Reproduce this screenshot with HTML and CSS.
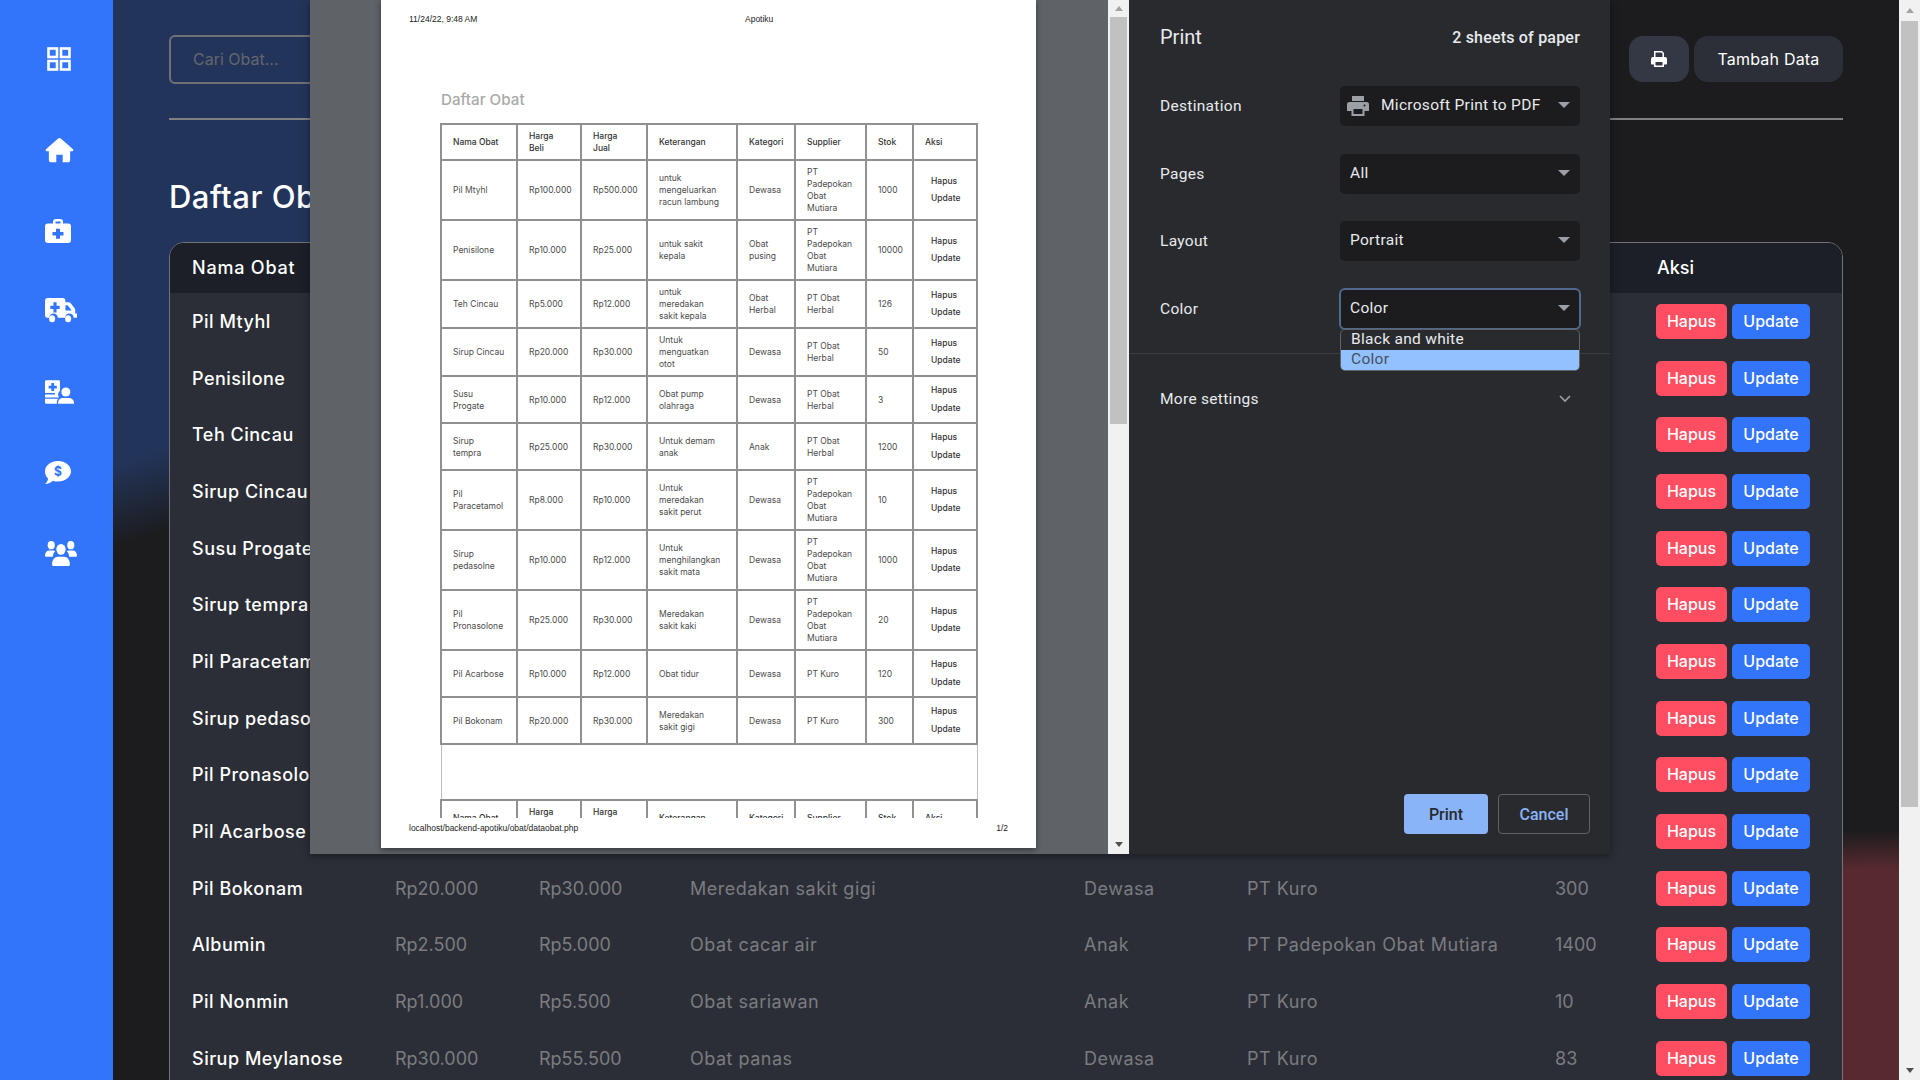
FILE: index.html
```html
<!DOCTYPE html>
<html lang="en">
<head>
    <meta charset="UTF-8">
    <meta name="viewport" content="width=device-width, initial-scale=1.0">
    <title>Apotiku</title>
    <link rel="stylesheet" href="styles.css">
</head>
<body>
    <nav class="sidebar">
        <a class="side-link first"><svg class="i-grid" viewBox="0 0 24 24"><g fill="none" stroke="#fff" stroke-width="2.6"><rect x="1.5" y="1.5" width="8.5" height="8.5"/><rect x="14" y="1.5" width="8.5" height="8.5"/><rect x="1.5" y="14" width="8.5" height="8.5"/><rect x="14" y="14" width="8.5" height="8.5"/></g></svg></a>
        <a class="side-link"><svg class="i-home" viewBox="0 0 30 26"><path fill="#fff" d="M15 0.5c.6 0 1 .2 1.4.6L29 12.2c.8.8.3 2-.8 2H26v9.3c0 1.3-1 2.3-2.3 2.3h-5.4v-8h-6.6v8H6.300c-1.300 0-2.300-1-2.300-2.300v-9.300H1.800c-1.100 0-1.600-1.200-.8-2L13.600 1.100c.4-.4.8-.6 1.400-.6z"/></svg></a>
        <a class="side-link"><svg class="i-case" viewBox="0.5 0 26 26" preserveAspectRatio="none"><path fill="#fff" fill-rule="evenodd" d="M10 5V3a3 3 0 0 1 3-3h4a3 3 0 0 1 3 3v2h5a3 3 0 0 1 3 3v15a3 3 0 0 1-3 3H5a3 3 0 0 1-3-3V8a3 3 0 0 1 3-3zm2.500-2.200V5h5V2.800zM13 10.500v3.500H9.500v4H13v3.500h4V18h3.500v-4H17v-3.500z" transform="translate(-1.500 0)"/></svg></a>
        <a class="side-link"><svg class="i-wide" viewBox="0 0 36 25" preserveAspectRatio="none"><path fill="#fff" fill-rule="evenodd" d="M2.500 0H20.500a2.500 2.500 0 0 1 2.500 2.500V4h3.500a3 3 0 0 1 2.200.9l4.400 4.700a3 3 0 0 1 .9 2.100V15h1a1 1 0 0 1 0 4h-2.700a5 5 0 0 0-9.800 0h-8a5 5 0 0 0-9.800 0H2.500A2.500 2.500 0 0 1 0 16.500V2.500A2.500 2.500 0 0 1 2.500 0zM9.500 4v3.500H6v3h3.500V14h3.500v-3.500h3.500v-3h-3.500V4zM23 7v5h7l-4.500-5z"/><circle cx="8" cy="20" r="3.400" fill="#fff"/><circle cx="26" cy="20" r="3.400" fill="#fff"/></svg></a>
        <a class="side-link"><svg class="i-doc" viewBox="0 0 32 26"><path fill="#fff" fill-rule="evenodd" d="M1.500 0H15a1.500 1.500 0 0 1 1.500 1.500V11.500a6 6 0 0 0-1 7.500H0V1.500A1.500 1.500 0 0 1 1.500 0zM7 3v3H4v3h3v3h3V9h3V6h-3V3zM0 14h11v1.800H0zM0 20.500h14.500a7 7 0 0 0-1.500 4V26H1.500A1.500 1.500 0 0 1 0 24.500z"/><circle cx="23" cy="13" r="5" fill="#fff"/><path fill="#fff" d="M14.500 26v-1.500c0-3 2.500-5 5-5h7c2.500 0 5.500 2 5.500 5V26z"/></svg></a>
        <a class="side-link"><svg class="i-chat" viewBox="1 0 28 23.500" preserveAspectRatio="none"><path fill="#fff" fill-rule="evenodd" d="M15 0c7.700 0 14 4.700 14 10.500S22.700 21 15 21c-2 0-3.900-.3-5.600-.9C7.700 22 4.300 23.500 1 23.500c1.700-1.300 3-3.400 3.300-5.700C2 15.900 1 13.300 1 10.500 1 4.700 7.300 0 15 0z"/><text x="15" y="15.500" class="dollar-sign">$</text></svg></a>
        <a class="side-link"><svg class="i-wide" viewBox="0 0 36 25" preserveAspectRatio="none"><g fill="#fff"><circle cx="7" cy="5" r="4"/><circle cx="29" cy="5" r="4"/><circle cx="18" cy="9" r="5.200"/><path d="M0 15c0-3 2-5 5-5h4c1 0 1.800.2 2.500.7-1.500 1.300-2.500 3-2.700 5.300H1a1 1 0 0 1-1-1z"/><path d="M36 15c0-3-2-5-5-5h-4c-1 0-1.800.2-2.500.7 1.500 1.300 2.500 3 2.700 5.300H35a1 1 0 0 0 1-1z"/><path d="M8 23c0-4 2.800-7 6.500-7h7c3.700 0 6.500 3 6.500 7v.5a1.500 1.500 0 0 1-1.500 1.500h-17A1.500 1.500 0 0 1 8 23.500z"/></g></svg></a>
    </nav>

    <main class="content">
        <header class="topbar">
            <input class="search" type="text" placeholder="Cari Obat...">
            <div class="top-actions">
                <button class="print-btn"><svg viewBox="0 0 16 16" width="16" height="16"><path fill="#fff" fill-rule="evenodd" d="M3 0h8l2 2v4h1a2 2 0 0 1 2 2v4.500a1 1 0 0 1-1 1h-2V16H3v-2.500H1a1 1 0 0 1-1-1V8a2 2 0 0 1 2-2h1zm1.500 1.500V6h7V2.600l-1.100-1.100zM4.500 11v3.500h7V11z"/></svg></button>
                <button class="add-btn">Tambah Data</button>
            </div>
        </header>
        <hr class="top-line">
        <h1 class="page-title">Daftar Obat</h1>

        <div class="table-card">
            <table class="drug-table">
                <colgroup>
                    <col class="c-name"><col class="c-buy"><col class="c-sell"><col class="c-desc"><col class="c-cat"><col class="c-sup"><col class="c-stock"><col class="c-act">
                </colgroup>
                <thead>
                    <tr><th>Nama Obat</th><th>Harga Beli</th><th>Harga Jual</th><th>Keterangan</th><th>Kategori</th><th>Supplier</th><th>Stok</th><th>Aksi</th></tr>
                </thead>
                <tbody>
                    <tr><td>Pil Mtyhl</td><td>Rp100.000</td><td>Rp500.000</td><td>untuk mengeluarkan racun lambung</td><td>Dewasa</td><td>PT Padepokan Obat Mutiara</td><td>1000</td><td><a class="btn red">Hapus</a><a class="btn blue">Update</a></td></tr>
                    <tr><td>Penisilone</td><td>Rp10.000</td><td>Rp25.000</td><td>untuk sakit kepala</td><td>Obat pusing</td><td>PT Padepokan Obat Mutiara</td><td>10000</td><td><a class="btn red">Hapus</a><a class="btn blue">Update</a></td></tr>
                    <tr><td>Teh Cincau</td><td>Rp5.000</td><td>Rp12.000</td><td>untuk meredakan sakit kepala</td><td>Obat Herbal</td><td>PT Obat Herbal</td><td>126</td><td><a class="btn red">Hapus</a><a class="btn blue">Update</a></td></tr>
                    <tr><td>Sirup Cincau</td><td>Rp20.000</td><td>Rp30.000</td><td>Untuk menguatkan otot</td><td>Dewasa</td><td>PT Obat Herbal</td><td>50</td><td><a class="btn red">Hapus</a><a class="btn blue">Update</a></td></tr>
                    <tr><td>Susu Progate</td><td>Rp10.000</td><td>Rp12.000</td><td>Obat pump olahraga</td><td>Dewasa</td><td>PT Obat Herbal</td><td>3</td><td><a class="btn red">Hapus</a><a class="btn blue">Update</a></td></tr>
                    <tr><td>Sirup tempra</td><td>Rp25.000</td><td>Rp30.000</td><td>Untuk demam anak</td><td>Anak</td><td>PT Obat Herbal</td><td>1200</td><td><a class="btn red">Hapus</a><a class="btn blue">Update</a></td></tr>
                    <tr><td>Pil Paracetamol</td><td>Rp8.000</td><td>Rp10.000</td><td>Untuk meredakan sakit perut</td><td>Dewasa</td><td>PT Padepokan Obat Mutiara</td><td>10</td><td><a class="btn red">Hapus</a><a class="btn blue">Update</a></td></tr>
                    <tr><td>Sirup pedasolne</td><td>Rp10.000</td><td>Rp12.000</td><td>Untuk menghilangkan sakit mata</td><td>Dewasa</td><td>PT Padepokan Obat Mutiara</td><td>1000</td><td><a class="btn red">Hapus</a><a class="btn blue">Update</a></td></tr>
                    <tr><td>Pil Pronasolone</td><td>Rp25.000</td><td>Rp30.000</td><td>Meredakan sakit kaki</td><td>Dewasa</td><td>PT Padepokan Obat Mutiara</td><td>20</td><td><a class="btn red">Hapus</a><a class="btn blue">Update</a></td></tr>
                    <tr><td>Pil Acarbose</td><td>Rp10.000</td><td>Rp12.000</td><td>Obat tidur</td><td>Dewasa</td><td>PT Kuro</td><td>120</td><td><a class="btn red">Hapus</a><a class="btn blue">Update</a></td></tr>
                    <tr><td>Pil Bokonam</td><td>Rp20.000</td><td>Rp30.000</td><td>Meredakan sakit gigi</td><td>Dewasa</td><td>PT Kuro</td><td>300</td><td><a class="btn red">Hapus</a><a class="btn blue">Update</a></td></tr>
                    <tr><td>Albumin</td><td>Rp2.500</td><td>Rp5.000</td><td>Obat cacar air</td><td>Anak</td><td>PT Padepokan Obat Mutiara</td><td>1400</td><td><a class="btn red">Hapus</a><a class="btn blue">Update</a></td></tr>
                    <tr><td>Pil Nonmin</td><td>Rp1.000</td><td>Rp5.500</td><td>Obat sariawan</td><td>Anak</td><td>PT Kuro</td><td>10</td><td><a class="btn red">Hapus</a><a class="btn blue">Update</a></td></tr>
                    <tr><td>Sirup Meylanose</td><td>Rp30.000</td><td>Rp55.500</td><td>Obat panas</td><td>Dewasa</td><td>PT Kuro</td><td>83</td><td><a class="btn red">Hapus</a><a class="btn blue">Update</a></td></tr>
                </tbody>
            </table>
        </div>
    </main>

    <div class="page-scroll">
        <span class="arrow-up"></span>
        <div class="page-thumb"></div>
        <span class="arrow-down"></span>
    </div>

    <!-- print dialog -->
    <div class="print-dialog">
        <div class="preview">
            <div class="sheet">
                <div class="sheet-head"><span class="sheet-date">11/24/22, 9:48 AM</span><span class="sheet-site">Apotiku</span></div>
                <div class="sheet-title">Daftar Obat</div>
                <div class="sheet-clip">
                    <table class="sheet-table">
                        <colgroup>
                            <col class="s-name"><col class="s-buy"><col class="s-sell"><col class="s-desc"><col class="s-cat"><col class="s-sup"><col class="s-stock"><col class="s-act">
                        </colgroup>
                        <tr class="s-head"><td>Nama Obat</td><td>Harga<br>Beli</td><td>Harga<br>Jual</td><td>Keterangan</td><td>Kategori</td><td>Supplier</td><td>Stok</td><td>Aksi</td></tr>
                        <tr><td>Pil Mtyhl</td><td>Rp100.000</td><td>Rp500.000</td><td>untuk<br>mengeluarkan<br>racun lambung</td><td>Dewasa</td><td>PT<br>Padepokan<br>Obat<br>Mutiara</td><td>1000</td><td class="s-links"><a>Hapus</a><a>Update</a></td></tr>
                        <tr><td>Penisilone</td><td>Rp10.000</td><td>Rp25.000</td><td>untuk sakit<br>kepala</td><td>Obat<br>pusing</td><td>PT<br>Padepokan<br>Obat<br>Mutiara</td><td>10000</td><td class="s-links"><a>Hapus</a><a>Update</a></td></tr>
                        <tr><td>Teh Cincau</td><td>Rp5.000</td><td>Rp12.000</td><td>untuk<br>meredakan<br>sakit kepala</td><td>Obat<br>Herbal</td><td>PT Obat<br>Herbal</td><td>126</td><td class="s-links"><a>Hapus</a><a>Update</a></td></tr>
                        <tr><td>Sirup Cincau</td><td>Rp20.000</td><td>Rp30.000</td><td>Untuk<br>menguatkan<br>otot</td><td>Dewasa</td><td>PT Obat<br>Herbal</td><td>50</td><td class="s-links"><a>Hapus</a><a>Update</a></td></tr>
                        <tr><td>Susu<br>Progate</td><td>Rp10.000</td><td>Rp12.000</td><td>Obat pump<br>olahraga</td><td>Dewasa</td><td>PT Obat<br>Herbal</td><td>3</td><td class="s-links"><a>Hapus</a><a>Update</a></td></tr>
                        <tr><td>Sirup<br>tempra</td><td>Rp25.000</td><td>Rp30.000</td><td>Untuk demam<br>anak</td><td>Anak</td><td>PT Obat<br>Herbal</td><td>1200</td><td class="s-links"><a>Hapus</a><a>Update</a></td></tr>
                        <tr><td>Pil<br>Paracetamol</td><td>Rp8.000</td><td>Rp10.000</td><td>Untuk<br>meredakan<br>sakit perut</td><td>Dewasa</td><td>PT<br>Padepokan<br>Obat<br>Mutiara</td><td>10</td><td class="s-links"><a>Hapus</a><a>Update</a></td></tr>
                        <tr><td>Sirup<br>pedasolne</td><td>Rp10.000</td><td>Rp12.000</td><td>Untuk<br>menghilangkan<br>sakit mata</td><td>Dewasa</td><td>PT<br>Padepokan<br>Obat<br>Mutiara</td><td>1000</td><td class="s-links"><a>Hapus</a><a>Update</a></td></tr>
                        <tr><td>Pil<br>Pronasolone</td><td>Rp25.000</td><td>Rp30.000</td><td>Meredakan<br>sakit kaki</td><td>Dewasa</td><td>PT<br>Padepokan<br>Obat<br>Mutiara</td><td>20</td><td class="s-links"><a>Hapus</a><a>Update</a></td></tr>
                        <tr><td>Pil Acarbose</td><td>Rp10.000</td><td>Rp12.000</td><td>Obat tidur</td><td>Dewasa</td><td>PT Kuro</td><td>120</td><td class="s-links"><a>Hapus</a><a>Update</a></td></tr>
                        <tr><td>Pil Bokonam</td><td>Rp20.000</td><td>Rp30.000</td><td>Meredakan<br>sakit gigi</td><td>Dewasa</td><td>PT Kuro</td><td>300</td><td class="s-links"><a>Hapus</a><a>Update</a></td></tr>
                        <tr class="s-break"><td colspan="8"></td></tr>
                        <tr class="s-head"><td>Nama Obat</td><td>Harga<br>Beli</td><td>Harga<br>Jual</td><td>Keterangan</td><td>Kategori</td><td>Supplier</td><td>Stok</td><td>Aksi</td></tr>
                    </table>
                </div>
                <div class="sheet-foot"><span>localhost/backend-apotiku/obat/dataobat.php</span><span>1/2</span></div>
            </div>
        </div>
        <div class="preview-scroll">
            <span class="arrow-up small"></span>
            <div class="preview-thumb"></div>
            <span class="arrow-down small"></span>
        </div>
        <aside class="settings">
            <div class="settings-top">
                <span class="settings-title">Print</span>
                <span class="sheet-count">2 sheets of paper</span>
            </div>
            <div class="setting">
                <span class="setting-label">Destination</span>
                <div class="select"><svg class="dest-icon" viewBox="0 0 22 20" width="22" height="20"><path fill="#9aa0a6" fill-rule="evenodd" d="M5 0h12v5H5zM2.500 6h17A2.500 2.500 0 0 1 22 8.500V15h-4.500v5h-13v-5H0V8.500A2.500 2.500 0 0 1 2.500 6zM6.500 13v5h9v-5zM17.500 8.500a1 1 0 1 0 0 2 1 1 0 0 0 0-2z"/></svg><span>Microsoft Print to PDF</span><i class="caret"></i></div>
            </div>
            <div class="setting">
                <span class="setting-label">Pages</span>
                <div class="select"><span>All</span><i class="caret"></i></div>
            </div>
            <div class="setting">
                <span class="setting-label">Layout</span>
                <div class="select"><span>Portrait</span><i class="caret"></i></div>
            </div>
            <div class="setting setting-color">
                <span class="setting-label">Color</span>
                <div class="select focused"><span>Color</span><i class="caret"></i>
                    <div class="option-list">
                        <div class="option">Black and white</div>
                        <div class="option picked">Color</div>
                    </div>
                </div>
            </div>
            <div class="more-settings">
                <span class="setting-label">More settings</span>
                <svg viewBox="0 0 12 8" width="12" height="8"><path fill="none" stroke="#9aa0a6" stroke-width="1.600" d="M1 1l5 5 5-5"/></svg>
            </div>
            <div class="dialog-actions">
                <button class="dlg-print">Print</button>
                <button class="dlg-cancel">Cancel</button>
            </div>
        </aside>
    </div>
</body>
</html>
```

FILE: styles.css
```css
* {
    box-sizing: border-box;
}
html, body {
    height: 100%;
    margin: 0;
    overflow: hidden;
}
body {
    display: flex;
    position: relative;
    font-family: Inter, "Noto Sans", sans-serif;
    background-color: #1c1c1e;
    background-image:
        radial-gradient(ellipse 520px 560px at 0 0, #23345a 86%, rgba(35, 52, 90, 0) 100%),
        radial-gradient(ellipse 700px 250px at 100% 100%, #562a2f 85%, rgba(86, 42, 47, 0) 100%);
}

/* sidebar */
.sidebar {
    flex: none;
    width: 113px;
    height: 100vh;
    padding-top: 39px;
    background-color: #3275fb;
}
.side-link {
    display: flex;
    align-items: center;
    height: 40px;
    margin-bottom: 40.500px;
    padding-left: 45px;
}
.side-link.first {
    margin-bottom: 51px;
}
.i-grid {
    width: 24px;
    height: 24px;
    margin-left: 2px;
}
.i-home {
    width: 29px;
    height: 26px;
}
.i-case {
    width: 26px;
    height: 24px;
}
.i-wide {
    width: 32px;
    height: 26px;
}
.i-doc {
    width: 29px;
    height: 26px;
}
.i-chat {
    width: 26px;
    height: 23px;
}
.dollar-sign {
    fill: #3275fb;
    font-family: Inter, sans-serif;
    font-size: 13px;
    font-weight: 700;
    text-anchor: middle;
}

/* page */
.content {
    flex: 1;
    min-width: 0;
    height: 100vh;
    padding: 34px 56px 0;
    overflow: hidden;
}
.topbar {
    display: flex;
    justify-content: space-between;
    align-items: center;
    height: 50px;
}
.search {
    width: 300px;
    height: 49px;
    padding: 0 22px;
    border: 2px solid #6f7176;
    border-radius: 6px;
    background: transparent;
    color: #fff;
    font: 16px Inter, sans-serif;
}
.search::placeholder {
    color: #63666d;
}
.top-actions {
    display: flex;
    gap: 5px;
}
.print-btn, .add-btn {
    height: 46px;
    border: 0;
    border-radius: 14px;
    color: #fff;
}
.print-btn {
    display: flex;
    justify-content: center;
    align-items: center;
    width: 60px;
    background-color: #343844;
}
.add-btn {
    width: 149px;
    padding-bottom: 2px;
    background-color: #2c2f38;
    font: 16px Inter, sans-serif;
    letter-spacing: .2px;
}
.top-line {
    height: 2px;
    margin: 34px 0 0;
    border: 0;
    background-color: #808080;
}
.page-title {
    margin: 55px 0 23px;
    color: #fff;
    font-size: 31px;
    font-weight: 500;
    letter-spacing: .5px;
    line-height: 44px;
}
.table-card {
    height: 1000px;
    border: 1px solid #727478;
    border-radius: 15px;
    background-color: #2b2e36;
    overflow: hidden;
}
.drug-table {
    width: 100%;
    table-layout: fixed;
    border-collapse: collapse;
    font-size: 18px;
}
.c-name { width: 203px; }
.c-buy { width: 144px; }
.c-sell { width: 151px; }
.c-desc { width: 394px; }
.c-cat { width: 163px; }
.c-sup { width: 308px; }
.c-stock { width: 102px; }
.c-act { width: 207px; }
.drug-table th {
    height: 50px;
    padding: 0 0 2px 22px;
    background-color: #1c1f28;
    color: #fff;
    font-weight: 500;
    text-align: left;
    white-space: nowrap;
}
.drug-table th:first-child {
    letter-spacing: .8px;
}
.drug-table td {
    height: 56.700px;
    padding: 0 0 0 22px;
    color: #7b7c80;
    white-space: nowrap;
    overflow: hidden;
}
.drug-table td:first-child {
    color: #fff;
    font-weight: 500;
    letter-spacing: .5px;
}
.drug-table td:nth-child(4),
.drug-table td:nth-child(5),
.drug-table td:nth-child(6) {
    letter-spacing: .5px;
}
.drug-table td:last-child {
    padding-left: 21px;
}
.btn {
    display: inline-block;
    height: 35px;
    border-radius: 5px;
    color: #fff;
    font-size: 16px;
    font-weight: 500;
    line-height: 35px;
    text-align: center;
}
.btn.red {
    width: 71px;
    margin-right: 5px;
    background-color: #ff4d62;
}
.btn.blue {
    width: 78px;
    background-color: #3275fb;
}

/* scrollbars */
.page-scroll {
    display: flex;
    flex: none;
    flex-direction: column;
    align-items: center;
    width: 21px;
    height: 100vh;
    background-color: #f1f1f1;
}
.page-thumb {
    flex: none;
    width: 17px;
    height: 786px;
    background-color: #c1c1c1;
}
.arrow-up, .arrow-down {
    flex: none;
    width: 0;
    border-left: 4.500px solid transparent;
    border-right: 4.500px solid transparent;
}
.arrow-up {
    margin: 8px 0 8px;
    border-bottom: 5px solid #a3a3a3;
}
.arrow-down {
    margin-top: auto;
    margin-bottom: 7px;
    border-top: 5px solid #505050;
}

/* print dialog */
.print-dialog {
    display: flex;
    position: absolute;
    top: 0;
    left: 310px;
    width: 1300px;
    height: 854px;
    box-shadow: 0 2px 8px rgba(0, 0, 0, .4);
}
.preview {
    flex: 1;
    padding-left: 71px;
    background-color: #5f6368;
    overflow: hidden;
}
.sheet {
    display: flex;
    flex-direction: column;
    width: 655px;
    height: 848px;
    background-color: #fff;
    box-shadow: 0 2px 6px rgba(0, 0, 0, .45);
}
.sheet-head {
    display: flex;
    flex: none;
    padding: 13px 0 0 28px;
    color: #222;
    font: 8.500px/12px "Liberation Sans", sans-serif;
}
.sheet-date {
    width: 336px;
}
.sheet-title {
    flex: none;
    margin: 66px 0 0 60px;
    color: #a9a9a9;
    font-size: 15.200px;
    font-weight: 500;
    line-height: 18px;
}
.sheet-clip {
    flex: none;
    height: 695px;
    margin: 14px 0 0 59px;
    overflow: hidden;
}
.sheet-table {
    width: 537px;
    table-layout: fixed;
    border-collapse: collapse;
    color: #4c4c4c;
    font-size: 8.500px;
    line-height: 12px;
    white-space: nowrap;
}
.s-name { width: 76px; }
.s-buy { width: 64px; }
.s-sell { width: 66px; }
.s-desc { width: 90px; }
.s-cat { width: 58px; }
.s-sup { width: 71px; }
.s-stock { width: 47px; }
.s-act { width: 64px; }
.sheet-table td {
    padding: 5px 0 5px 11px;
    border: 2px solid #909090;
    overflow: hidden;
}
.sheet-table .s-head td {
    color: #333;
    font-weight: 500;
}
.sheet-table .s-links {
    padding-left: 17px;
    color: #333;
    font-weight: 500;
}
.s-links a {
    display: block;
    line-height: 17.500px;
}
.s-break td {
    height: 56px;
    border: 1px solid #bcbcbc;
}
.sheet-foot {
    display: flex;
    justify-content: space-between;
    padding: 4px 28px 0 28px;
    color: #222;
    font: 8.500px/12px "Liberation Sans", sans-serif;
}
.preview-scroll {
    display: flex;
    flex: none;
    flex-direction: column;
    align-items: center;
    width: 21px;
    background-color: #f1f1f1;
}
.arrow-up.small {
    margin: 6px 0 6px;
}
.preview-thumb {
    flex: none;
    width: 17px;
    height: 407px;
    background-color: #c1c1c1;
}
.settings {
    display: flex;
    flex: none;
    flex-direction: column;
    width: 481px;
    background-color: #292a2d;
    color: #e8eaed;
    font-family: Roboto, sans-serif;
    font-size: 15.500px;
}
.settings-top {
    display: flex;
    flex: none;
    justify-content: space-between;
    align-items: center;
    height: 74px;
    padding: 0 30px 0 31px;
}
.settings-title {
    font-size: 20px;
}
.sheet-count {
    font-size: 16px;
    font-weight: 500;
    letter-spacing: .2px;
}
.setting {
    display: flex;
    flex: none;
    justify-content: space-between;
    align-items: center;
    height: 40px;
    margin: 12px 30px 15.500px 31px;
}
.setting-label {
    letter-spacing: .3px;
}
.select {
    display: flex;
    position: relative;
    align-items: center;
    width: 240px;
    height: 40px;
    padding: 0 10px 2px;
    border-radius: 5px;
    background-color: #1c1c1e;
    letter-spacing: .3px;
}
.select.focused {
    outline: 2px solid #52698f;
    outline-offset: -1px;
}
.dest-icon {
    margin: 2px 12px 0 -3px;
}
.caret {
    width: 0;
    margin-left: auto;
    border-top: 6px solid #9aa0a6;
    border-left: 6px solid transparent;
    border-right: 6px solid transparent;
}
.option-list {
    position: absolute;
    top: 40px;
    left: 0;
    width: 240px;
    border: 1px solid #5f6368;
    border-radius: 5px;
    background-color: #292a2d;
    overflow: hidden;
    z-index: 2;
}
.option {
    height: 20px;
    padding-left: 10px;
    line-height: 19px;
}
.option.picked {
    background-color: #93c0ff;
    color: #44505f;
}
.setting-color {
    margin-bottom: 24px;
}
.more-settings {
    display: flex;
    flex: none;
    justify-content: space-between;
    align-items: center;
    height: 91px;
    padding: 0 39px 0 31px;
    border-top: 1px solid #3c3d40;
}
.dialog-actions {
    display: flex;
    gap: 10px;
    justify-content: flex-end;
    margin-top: auto;
    padding: 0 20px 20px 0;
}
.dialog-actions button {
    height: 40px;
    border-radius: 4px;
    font: 500 16px Roboto, sans-serif;
}
.dlg-print {
    width: 84px;
    border: 0;
    background-color: #8ab4f8;
    color: #292a2d;
}
.dlg-cancel {
    width: 92px;
    border: 1px solid #5f6368;
    background-color: transparent;
    color: #8ab4f8;
}
```
